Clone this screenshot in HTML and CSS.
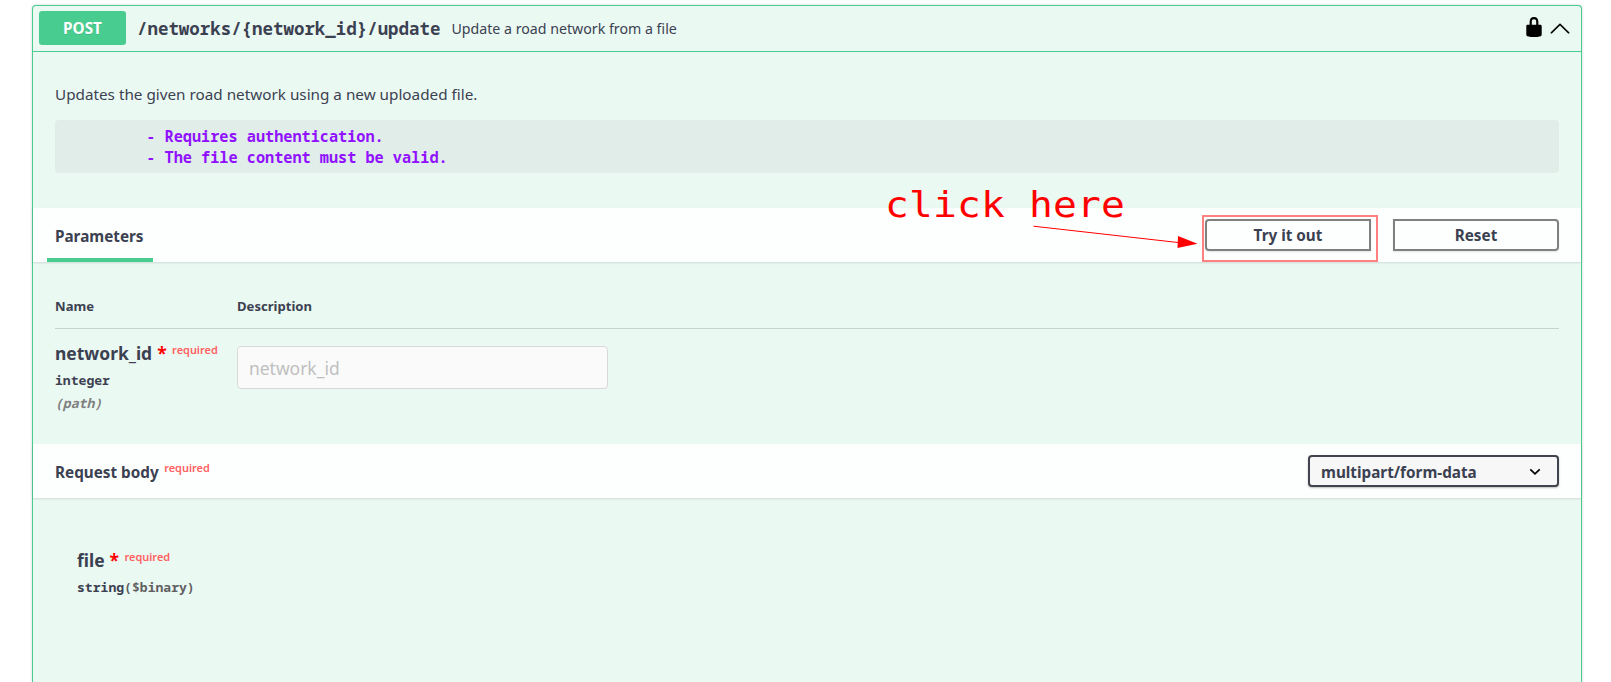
FILE: index.html
```html
<!DOCTYPE html>
<html lang="en">
<head>
<meta charset="utf-8">
<title>API documentation</title>
<link rel="stylesheet" href="styles.css">
</head>
<body>
<main class="opblock">
  <header class="summary">
    <span class="method">POST</span>
    <span class="path">/networks/{network_id}/update</span>
    <span class="summary-text">Update a road network from a file</span>
    <svg class="lock" viewBox="0 0 20 20"><path d="M15.8 8H14V5.6C14 2.703 12.665 1 10 1 7.334 1 6 2.703 6 5.6V8H4c-.553 0-1 .646-1 1.199V17c0 .549.428 1.139.951 1.307l1.197.387C5.672 18.861 6.55 19 7.1 19h5.8c.549 0 1.428-.139 1.951-.307l1.196-.387c.524-.167.953-.757.953-1.306V9.199C17 8.646 16.352 8 15.8 8zM12 8H8V5.199C8 3.754 8.797 3 10 3c1.203 0 2 .754 2 2.199V8z"/></svg>
    <svg class="arrow" viewBox="0 0 20 20"><path d="M 17.418 14.908 C 17.69 15.176 18.127 15.176 18.397 14.908 C 18.667 14.64 18.668 14.207 18.397 13.939 L 10.489 6.109 C 10.219 5.841 9.782 5.841 9.51 6.109 L 1.602 13.939 C 1.332 14.207 1.332 14.64 1.602 14.908 C 1.873 15.176 2.311 15.176 2.581 14.908 L 10 7.767 L 17.418 14.908 Z"/></svg>
  </header>
  <section class="description">
    <p class="description-text">Updates the given road network using a new uploaded file.</p>
    <pre class="notes">          - Requires authentication.
          - The file content must be valid.</pre>
  </section>
  <div class="section-header">
    <h4 class="tab">Parameters</h4>
    <div class="buttons">
      <button class="btn btn-try">Try it out</button>
      <button class="btn btn-reset">Reset</button>
    </div>
  </div>
  <section class="parameters">
    <div class="row head"><span>Name</span><span>Description</span></div>
    <div class="row param">
      <div>
        <div class="name">network_id<span class="star">*</span><span class="required">required</span></div>
        <div class="type">integer</div>
        <div class="in">(path)</div>
      </div>
      <input class="field" type="text" placeholder="network_id">
    </div>
  </section>
  <div class="section-header">
    <h4 class="title">Request body<span class="required body-required">required</span></h4>
    <div class="select"><span>multipart/form-data</span><svg class="chevron" viewBox="0 0 12 8"><path d="M1.3 1.3 6 5.9l4.700-4.600"/></svg></div>
  </div>
  <section class="body">
    <div class="name">file<span class="star">*</span><span class="required">required</span></div>
    <div class="type">string<span class="format">($binary)</span></div>
  </section>
</main>
<div class="note">click here</div>
<svg class="callout" viewBox="0 0 360 60"><path class="line" d="M3.500 16.200 148 32.500"/><path class="tip" d="M148 26 167.500 33.700 147.500 38z"/><rect x="173" y="6" width="174" height="45"/></svg>
</body>
</html>
```
FILE: styles.css
```css
* { box-sizing: border-box; }
body {
  margin: 0;
  padding: 5px 29px 0 32px;
  height: 682px;
  overflow: hidden;
  background: #fff;
  color: #3b4151;
  font-family: "Noto Sans", sans-serif;
  font-size: 15.27px;
}
.opblock {
  height: 677px;
  border: 1px solid #49cc90;
  border-bottom: 0;
  border-radius: 4px 4px 0 0;
  background: #ebf9f3;
  box-shadow: 0 0 3px rgba(0, 0, 0, .19);
}
.summary {
  display: flex;
  align-items: center;
  height: 46px;
  padding: 0 10px 1px 6px;
  border-bottom: 1px solid #49cc90;
}
.method {
  width: 87px;
  height: 34px;
  border-radius: 3px;
  background: #49cc90;
  color: #fff;
  font-weight: 700;
  line-height: 34px;
  text-align: center;
  text-shadow: 0 1px 0 rgba(0, 0, 0, .1);
}
.path, .notes, .type, .in { font-family: "Noto Sans Mono", "DejaVu Sans Mono", monospace; font-weight: 700; }
.path { margin-left: 11px; font-size: 17.45px; }
.summary-text { flex: 1; margin-left: 11px; font-size: 14.2px; }
.lock { width: 22px; height: 22px; margin-right: 4px; margin-top: -2px; }
.arrow { width: 22px; height: 22px; margin-top: -1px; }
.description { height: 156px; padding: 32px 22px 0; }
.description-text { margin: 0; line-height: 21px; }
.notes {
  height: 53px;
  margin: 15px 0 0;
  padding: 6px 0;
  border-radius: 4px;
  background: #e0ede8;
  color: #9012fe;
  font-size: 15.22px;
  line-height: 21px;
}
.section-header {
  display: flex;
  align-items: center;
  justify-content: space-between;
  height: 54px;
  padding: 0 22px;
  background: #fdfffe;
  box-shadow: 0 1px 2px rgba(0, 0, 0, .12);
}
.tab, .title { margin: 0; font-size: 15.27px; }
.title { padding-top: 1px; }
.tab { height: 54px; margin-left: -8px; padding: 0 9px 0 8px; border-bottom: 4px solid #49cc90; line-height: 54px; height: 53px; }
.buttons { display: flex; gap: 22px; }
.btn {
  width: 166px;
  height: 32px;
  padding: 0;
  border: 2px solid gray;
  background: transparent;
  color: #3b4151;
  font: 700 15.27px "Noto Sans", sans-serif;
  box-shadow: 0 1px 2px rgba(0, 0, 0, .1);
}
.btn-try { border-radius: 4px 0 0 4px; }
.btn-reset { border-radius: 0 4px 4px 0; }
.parameters { height: 182px; padding: 22px 22px 0; }
.row { display: grid; grid-template-columns: 182px 371px; }
.head { height: 45px; border-bottom: 1px solid #c6d3d0; font-size: 13.09px; font-weight: 700; line-height: 45px; }
.param { padding-top: 11px; }
.name { font-size: 17.45px; font-weight: 700; line-height: 26px; white-space: nowrap; }
.star { margin-left: 5px; color: #f00; }
.required { margin-left: 5.5px; color: #ff6060; font-size: 10.95px; font-weight: 600; vertical-align: 6px; line-height: 1; }
.type { margin-top: 5px; font-size: 13.09px; line-height: 18px; }
.in { margin-top: 5px; color: gray; font-size: 13.09px; font-style: italic; line-height: 18px; }
.field {
  height: 43px;
  margin-top: 6px;
  padding: 0 11px;
  border: 1px solid #d9d9d9;
  border-radius: 4px;
  background: #fafafa;
  font: 17.45px "Noto Sans", sans-serif;
}
.field::placeholder { color: #bfbfbf; }
.select {
  display: flex;
  align-items: center;
  justify-content: space-between;
  width: 251px;
  height: 32px;
  padding: 1px 16px 0 11px;
  border: 2px solid #41444e;
  border-radius: 4px;
  background: #f7f7f7;
  font-weight: 700;
  box-shadow: 0 1px 2px rgba(0, 0, 0, .25);
}
.chevron { width: 12px; height: 8px; fill: none; stroke: #000; stroke-width: 1.7; }
.body { padding: 49px 44px; }
.format { color: #606060; }
/* Annotation drawn over the panel */
.note {
  position: absolute;
  left: 885px;
  top: 183px;
  color: #f00;
  font: 36px/44px "DejaVu Sans Mono", monospace;
  letter-spacing: .15px;
  transform: scaleX(1.1);
  transform-origin: left;
}
.callout { position: absolute; left: 1030px; top: 210px; width: 360px; height: 60px; fill: none; stroke: #f00; }
.callout .tip { fill: #f00; stroke: none; }
.callout rect { stroke: #ff8080; stroke-width: 2; }
```
